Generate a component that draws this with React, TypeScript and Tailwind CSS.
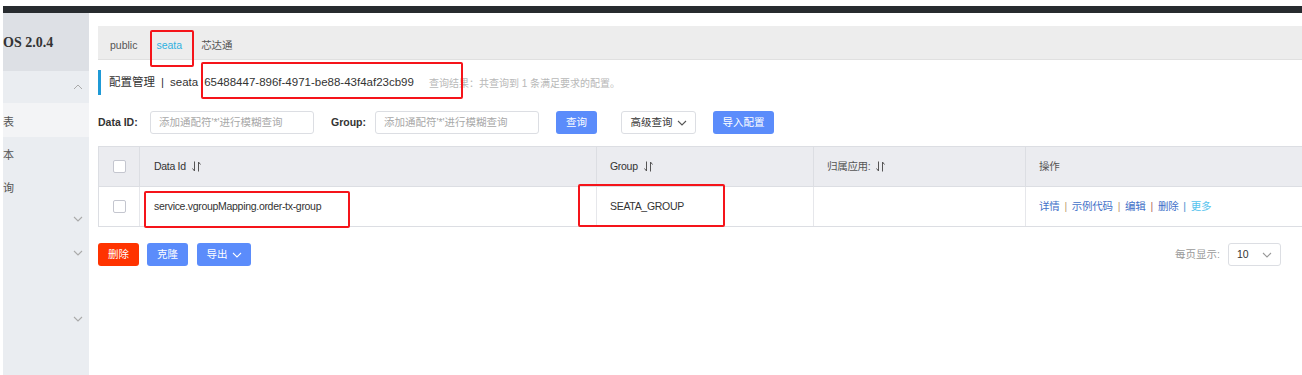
import React from "react";

const font = "font-['Liberation_Sans','Noto_Sans_CJK_SC',sans-serif]";

const SortIcon = () => (
  <svg width="9" height="11" viewBox="0 0 9 11" className="ml-[6px] inline-block">
    <path d="M2.5 0.5 V10 M2.5 10 L0.5 7.5" stroke="#555" strokeWidth="1" fill="none" />
    <path d="M6.5 10.5 V1 M6.5 1 L8.5 3.5" stroke="#555" strokeWidth="1" fill="none" />
  </svg>
);

const ChevronDown = ({ color = "#999", size = 8 }: { color?: string; size?: number }) => (
  <svg width={size + 2} height={size} viewBox="0 0 10 8">
    <polyline points="1,2 5,6 9,2" stroke={color} strokeWidth="1.1" fill="none" />
  </svg>
);

const ChevronUp = () => (
  <svg width="10" height="8" viewBox="0 0 10 8">
    <polyline points="1,6 5,2 9,6" stroke="#aaa" strokeWidth="1" fill="none" />
  </svg>
);

const Checkbox = () => (
  <div className="w-[13px] h-[13px] rounded-[2px] border border-[#c4c6cf] bg-white" />
);

const RedBox = ({ className }: { className: string }) => (
  <div className={`absolute border-2 border-[#f5141a] rounded-[2px] pointer-events-none ${className}`} />
);

const Sidebar = () => (
  <div className="w-[86px] shrink-0 bg-[#eaedf1] flex flex-col text-[#555]">
    <div className="h-[58px] bg-[#dde0e5] flex items-center font-['Liberation_Serif',serif] font-bold text-[14px] text-[#333]">
      OS 2.0.4
    </div>
    <div className="h-[32px] flex items-center justify-end pr-[6px]">
      <ChevronUp />
    </div>
    <div className="h-[34px] bg-[#f3f4f6] flex items-center pt-[4px] text-[11px]">表</div>
    <div className="h-[33px] flex items-center pt-[4px] text-[11px]">本</div>
    <div className="h-[33px] flex items-center pt-[4px] text-[11px]">询</div>
    <div className="h-[20px] flex items-end justify-end pr-[6px]">
      <ChevronDown color="#aaa" />
    </div>
    <div className="h-[34px] flex items-end justify-end pr-[6px]">
      <ChevronDown color="#aaa" />
    </div>
    <div className="h-[66px] flex items-end justify-end pr-[6px]">
      <ChevronDown color="#aaa" />
    </div>
  </div>
);

const Input = ({ w }: { w: string }) => (
  <div className={`${w} h-[23px] border border-[#dcdee3] rounded-[3px] flex items-center px-[8px] text-[10.5px] text-[#a8a8a8]`}>
    添加通配符'*'进行模糊查询
  </div>
);

const BlueButton = ({ children, className = "" }: { children: React.ReactNode; className?: string }) => (
  <div className={`h-[23px] rounded-[3px] bg-[#5b8cfb] text-white text-[10.5px] flex items-center justify-center ${className}`}>
    {children}
  </div>
);

export default function App() {
  return (
    <div className={`w-[1302px] h-[375px] bg-white overflow-hidden ${font}`}>
      <div className="h-[6px]" />
      <div className="h-[7px] ml-[3px] bg-[#272b2f]" />
      <div className="flex h-[362px]">
        <div className="w-[3px] shrink-0" />
        <Sidebar />
        <div className="flex-1 pl-[9px] relative">
          {/* tabs */}
          <div className="mt-[13px] h-[34px] pt-[6px] bg-[#ededed] border-b border-[#e0e0e0] flex items-center gap-[19px] pl-[12px] text-[10.5px] text-[#555]">
            <span>public</span>
            <span className="text-[#2fb1e0]">seata</span>
            <span>芯达通</span>
          </div>

          {/* title */}
          <div className="mt-[10px] h-[25px] pt-[1px] flex items-center border-l-[3px] border-[#1f9ad6] pl-[8px] text-[11.5px] text-[#333]">
            <span>配置管理</span>
            <span className="mx-[6px]">|</span>
            <span>seata</span>
            <span className="ml-[6px]">65488447-896f-4971-be88-43f4af23cb99</span>
            <span className="ml-[15px] text-[10px] text-[#b8b8b8]">查询结果：共查询到 1 条满足要求的配置。</span>
          </div>

          {/* search */}
          <div className="mt-[16px] h-[23px] flex items-center text-[10.5px]">
            <span className="font-bold text-[#333] w-[52px]">Data ID:</span>
            <Input w="w-[164px]" />
            <span className="font-bold text-[#333] ml-[17px] w-[44px]">Group:</span>
            <Input w="w-[164px]" />
            <BlueButton className="ml-[17px] w-[41px]">查询</BlueButton>
            <div className="ml-[24px] w-[75px] h-[23px] border border-[#dcdee3] rounded-[3px] flex items-center justify-center gap-[4px] text-[10.5px] text-[#333]">
              高级查询 <ChevronDown color="#555" />
            </div>
            <BlueButton className="ml-[17px] w-[61px]">导入配置</BlueButton>
          </div>

          {/* table */}
          <div className="mt-[12px] border-t border-b border-l border-[#dcdee3] text-[10.5px] text-[#333] tracking-[-0.3px]">
            <div className="grid grid-cols-[41px_457px_217px_212px_1fr] h-[40px] bg-[#ebecf0] border-b border-[#dcdee3]">
              <div className="flex items-center justify-center border-r border-[#dcdee3]">
                <Checkbox />
              </div>
              <div className="flex items-center pl-[14px] border-r border-[#dcdee3]">
                Data Id <SortIcon />
              </div>
              <div className="flex items-center pl-[13px] border-r border-[#dcdee3]">
                Group <SortIcon />
              </div>
              <div className="flex items-center pl-[13px] border-r border-[#dcdee3] text-[#555]">
                归属应用: <SortIcon />
              </div>
              <div className="flex items-center pl-[13px] text-[#555]">操作</div>
            </div>
            <div className="grid grid-cols-[41px_457px_217px_212px_1fr] h-[39px]">
              <div className="flex items-center justify-center border-r border-[#e6e7eb]">
                <Checkbox />
              </div>
              <div className="flex items-center pl-[14px] border-r border-[#e6e7eb]">
                service.vgroupMapping.order-tx-group
              </div>
              <div className="flex items-center pl-[13px] border-r border-[#e6e7eb]">SEATA_GROUP</div>
              <div className="border-r border-[#e6e7eb]" />
              <div className="flex items-center pl-[13px] text-[#3f6fc8]">
                <span>详情</span>
                <span className="mx-[5px] text-[#c0a070]">|</span>
                <span>示例代码</span>
                <span className="mx-[5px] text-[#c0a070]">|</span>
                <span>编辑</span>
                <span className="mx-[5px] text-[#b57060]">|</span>
                <span>删除</span>
                <span className="mx-[5px] text-[#3a8ed0]">|</span>
                <span className="text-[#56c3ee]">更多</span>
              </div>
            </div>
          </div>

          {/* footer */}
          <div className="mt-[16px] h-[23px] flex items-center">
            <div className="w-[41px] h-[23px] rounded-[3px] bg-[#ff3300] text-white text-[10.5px] flex items-center justify-center">
              删除
            </div>
            <BlueButton className="ml-[8px] w-[41px]">克隆</BlueButton>
            <BlueButton className="ml-[9px] w-[54px] gap-[4px]">
              导出 <ChevronDown color="#fff" />
            </BlueButton>
            <div className="ml-auto flex items-center text-[10.5px]">
              <span className="text-[#999]">每页显示:</span>
              <div className="ml-[8px] mr-[21px] w-[53px] h-[23px] border border-[#dcdee3] rounded-[3px] flex items-center justify-between px-[8px] text-[#333]">
                10 <ChevronDown color="#999" />
              </div>
            </div>
          </div>

          {/* annotation boxes */}
          <RedBox className="left-[61px] top-[17px] w-[44px] h-[37px]" />
          <RedBox className="left-[112px] top-[49px] w-[262px] h-[37px]" />
          <RedBox className="left-[55px] top-[178px] w-[206px] h-[37px]" />
          <RedBox className="left-[489px] top-[171px] w-[147px] h-[43px]" />
        </div>
      </div>
    </div>
  );
}
